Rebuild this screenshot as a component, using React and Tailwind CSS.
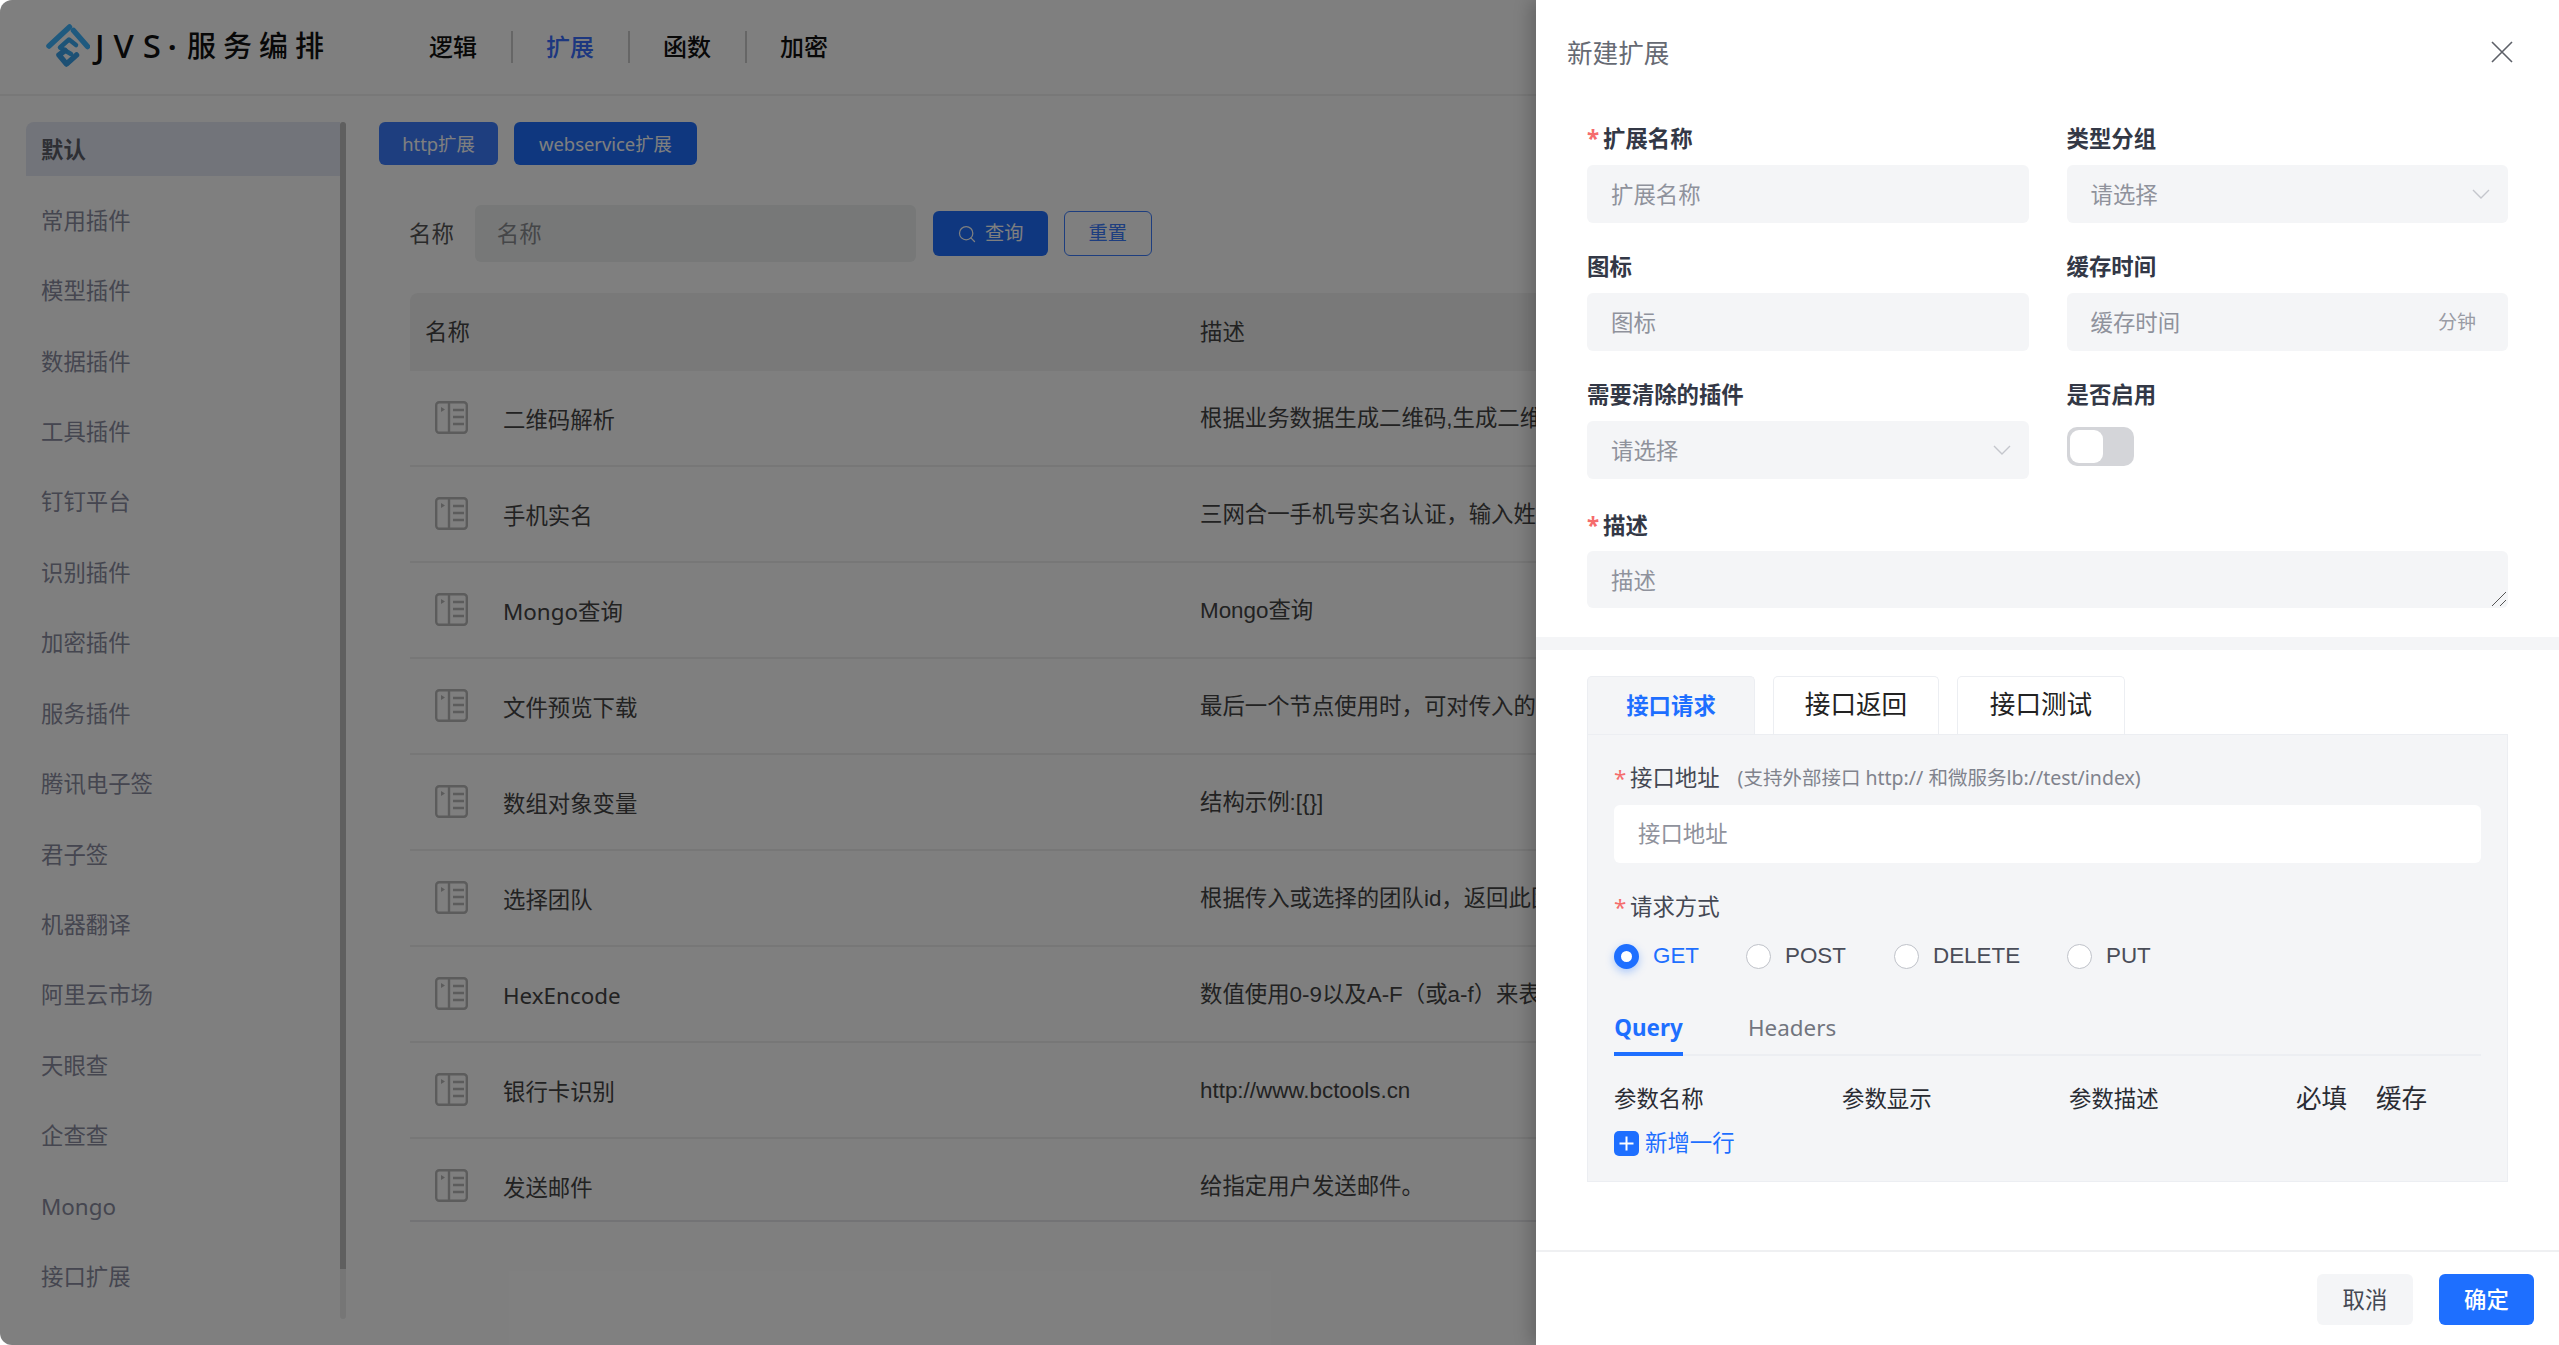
import React from 'react';
import { Search } from 'lucide-react';

const sideItems = ['常用插件', '模型插件', '数据插件', '工具插件', '钉钉平台', '识别插件', '加密插件', '服务插件', '腾讯电子签', '君子签', '机器翻译', '阿里云市场', '天眼查', '企查查', 'Mongo', '接口扩展'];

const rows = [
    ['二维码解析', '根据业务数据生成二维码,生成二维'],
    ['手机实名', '三网合一手机号实名认证，输入姓'],
    ['Mongo查询', 'Mongo查询'],
    ['文件预览下载', '最后一个节点使用时，可对传入的'],
    ['数组对象变量', '结构示例:[{}]'],
    ['选择团队', '根据传入或选择的团队id，返回此团'],
    ['HexEncode', '数值使用0-9以及A-F（或a-f）来表'],
    ['银行卡识别', 'http://www.bctools.cn'],
    ['发送邮件', '给指定用户发送邮件。'],
];

function Logo() {
    return (
        <svg width="44" height="44" viewBox="0 0 44 44" fill="none" className="shrink-0">
            <g stroke="#3fb4ff" strokeWidth="5.5" strokeLinecap="round" strokeLinejoin="round">
                <path d="M23.5 3 L3 22" />
                <path d="M27.5 6.5 L41.5 22.5" />
            </g>
            <g stroke="#3aa8f0" strokeWidth="4.5" strokeLinecap="round" strokeLinejoin="round">
                <path d="M30 21 L23 15.5 L14 23.5 L25 30" />
            </g>
            <g stroke="#3aa0e8" strokeWidth="5.5" strokeLinecap="round" strokeLinejoin="round">
                <path d="M19 26.5 L13 31 L20.5 40 L30.5 31" />
            </g>
        </svg>
    );
}

function RowIcon() {
    return (
        <svg width="33" height="33" viewBox="0 0 33 33" fill="none" className="shrink-0">
            <rect x="1.2" y="1.2" width="30.6" height="30.6" rx="3" stroke="#b8b8b8" strokeWidth="2.4" />
            <path d="M14 1 V32" stroke="#b8b8b8" strokeWidth="2.4" />
            <path d="M6 6 L10 8.5 L6 11 Z" fill="#b8b8b8" />
            <path d="M18 9 H29 M18 16 H29 M18 23 H29" stroke="#b8b8b8" strokeWidth="2.4" />
        </svg>
    );
}

function Chevron() {
    return (
        <svg width="18" height="10" viewBox="0 0 18 10" fill="none">
            <path d="M1 1 L9 9 L17 1" stroke="#c4c6cc" strokeWidth="1.4" />
        </svg>
    );
}

function FormLabel({ required, children }) {
    return (
        <div className="h-[26px] pt-[3px] flex items-center text-[22.4px] font-bold text-[#333846] leading-none">
            {required && <span className="w-[16px] text-[#f56c6c]">*</span>}
            {children}
        </div>
    );
}

function Field({ required, label, placeholder, select, suffix }) {
    return (
        <div className="w-[442px]">
            <FormLabel required={required}>{label}</FormLabel>
            <div className="mt-[14px] h-[58px] rounded-[6px] bg-[#f4f5f7] pl-[24px] pr-[18px] flex items-center justify-between text-[22.4px] text-[#8f929c]">
                <span className="pt-[2px]">{placeholder}</span>
                {select && <Chevron />}
                {suffix && <span className="text-[19px] text-[#9a9ca5] mr-[14px]">{suffix}</span>}
            </div>
        </div>
    );
}

function Radio({ label, checked, className }) {
    return (
        <div className={`flex items-center gap-[14px] text-[22.4px] font-['Liberation_Sans',sans-serif] ${className}`}>
            {checked ? (
                <span className="w-[25px] h-[25px] rounded-full border-[7px] border-[#1e6fff] bg-white shadow-[0_3px_8px_rgba(30,111,255,0.35)]" />
            ) : (
                <span className="w-[25px] h-[25px] rounded-full border border-[#bfc2c9] bg-white" />
            )}
            <span className={checked ? 'text-[#1e6fff]' : 'text-[#4a4d58]'}>{label}</span>
        </div>
    );
}

function Drawer() {
    return (
        <div className="absolute top-0 right-0 bottom-0 w-[1023px] bg-white shadow-[-6px_0_16px_rgba(0,0,0,0.2)] flex flex-col">
            <div className="h-[106px] shrink-0 pl-[31px] pr-[46px] flex items-center justify-between text-[25.6px] text-[#666a73]">
                <span className="pt-[2px]">新建扩展</span>
                <svg width="22" height="22" viewBox="0 0 22 22" fill="none" className="-mt-[3px]">
                    <path d="M1 1 L21 21 M21 1 L1 21" stroke="#5d6068" strokeWidth="1.6" />
                </svg>
            </div>

            <div className="pl-[51px] pr-[51px] flex flex-col gap-[30px] pt-[19px]">
                <div className="flex gap-[38px]">
                    <Field required label="扩展名称" placeholder="扩展名称" />
                    <Field label="类型分组" placeholder="请选择" select />
                </div>
                <div className="flex gap-[38px]">
                    <Field label="图标" placeholder="图标" />
                    <Field label="缓存时间" placeholder="缓存时间" suffix="分钟" />
                </div>
                <div className="flex gap-[38px]">
                    <Field label="需要清除的插件" placeholder="请选择" select />
                    <div className="w-[442px]">
                        <FormLabel>是否启用</FormLabel>
                        <div className="mt-[20px] w-[67px] h-[39px] rounded-[10px] bg-[#d4d5d9] p-[3px]">
                            <div className="w-[33px] h-[33px] rounded-[9px] bg-white" />
                        </div>
                    </div>
                </div>
                <div className="mt-[3px]">
                    <FormLabel required>描述</FormLabel>
                    <div className="relative mt-[13px] h-[57px] rounded-[6px] bg-[#f4f5f7] pl-[24px] flex items-center text-[22.4px] text-[#8f929c]">
                        <span className="pt-[2px]">描述</span>
                        <svg width="16" height="16" viewBox="0 0 16 16" fill="none" className="absolute right-[1px] bottom-[1px]">
                            <path d="M1 15 L15 1 M9 15 L15 9" stroke="#555" strokeWidth="1" />
                        </svg>
                    </div>
                </div>
            </div>

            <div className="mt-[29px] h-[13px] shrink-0 bg-[#f4f5f7]" />

            <div className="pl-[51px] pr-[51px] pt-[26px]">
                <div className="flex gap-[18px] h-[58px] items-stretch">
                    <div className="w-[168px] rounded-t-[5px] border border-b-0 border-[#eceef2] bg-[#f4f5f7] flex items-center justify-center text-[22.4px] font-bold text-[#1e6fff]">接口请求</div>
                    <div className="w-[166px] rounded-t-[5px] border border-b-0 border-[#eceef2] flex items-center justify-center text-[25.6px] text-[#222]">接口返回</div>
                    <div className="w-[168px] rounded-t-[5px] border border-b-0 border-[#eceef2] flex items-center justify-center text-[25.6px] text-[#222]">接口测试</div>
                </div>

                <div className="h-[448px] border border-[#eceef2] bg-[#f4f5f7] px-[26px] pt-[29px]">
                    <div className="h-[28px] flex items-center text-[22.4px] text-[#444853]">
                        <span className="w-[16px] text-[#f56c6c]">*</span>
                        <span>接口地址</span>
                        <span className="ml-[18px] text-[19.5px] text-[#80838d]">(支持外部接口 http:// 和微服务lb://test/index)</span>
                    </div>
                    <div className="mt-[13px] h-[58px] rounded-[6px] bg-white pl-[24px] flex items-center text-[22.4px] text-[#8f929c]">接口地址</div>
                    <div className="mt-[30px] h-[28px] flex items-center text-[22.4px] text-[#444853]">
                        <span className="w-[16px] text-[#f56c6c]">*</span>
                        <span>请求方式</span>
                    </div>
                    <div className="mt-[21px] h-[28px] flex items-center">
                        <Radio checked label="GET" className="w-[132px]" />
                        <Radio label="POST" className="w-[148px]" />
                        <Radio label="DELETE" className="w-[173px]" />
                        <Radio label="PUT" />
                    </div>
                    <div className="mt-[30px] h-[56px] border-b-2 border-[#eceef2] flex gap-[65px] text-[22.4px]">
                        <div className="h-[56px] w-[69px] border-b-[4px] border-[#1e6fff] font-bold text-[#1e6fff] flex items-start justify-center pt-[10px] leading-[36px]">Query</div>
                        <div className="text-[#72757f] pt-[10px] leading-[36px]">Headers</div>
                    </div>
                    <div className="mt-[26px] h-[34px] flex items-center text-[22.4px] text-[#2a2c33]">
                        <span className="w-[228px]">参数名称</span>
                        <span className="w-[227px]">参数显示</span>
                        <span className="w-[227px]">参数描述</span>
                        <span className="w-[80px] text-[25.6px]">必填</span>
                        <span className="text-[25.6px]">缓存</span>
                    </div>
                    <div className="mt-[13px] h-[28px] flex items-center gap-[6px] text-[22.4px] text-[#1e6fff]">
                        <svg width="25" height="25" viewBox="0 0 25 25" className="shrink-0">
                            <rect width="25" height="25" rx="5" fill="#1e6fff" />
                            <path d="M12.5 5.5 V19.5 M5.5 12.5 H19.5" stroke="#fff" strokeWidth="2" />
                        </svg>
                        新增一行
                    </div>
                </div>
            </div>

            <div className="mt-auto h-[95px] shrink-0 border-t-2 border-[#eff0f2] pt-[22px] pr-[25px] flex justify-end gap-[26px] text-[22.4px]">
                <div className="w-[96px] h-[51px] rounded-[6px] bg-[#f4f5f7] text-[#444853] flex items-center justify-center">取消</div>
                <div className="w-[95px] h-[51px] rounded-[6px] bg-[#1e6fff] text-white font-medium flex items-center justify-center">确定</div>
            </div>
        </div>
    );
}

export default function App() {
    return (
        <div className="relative h-screen overflow-hidden bg-white font-['Noto_Sans','Noto_Sans_CJK_SC',sans-serif] text-[22.4px]">
            {/* page under the mask */}
            <div className="h-[96px] border-b-2 border-[#f0f0f0] pl-[46px] flex items-center">
                <div className="w-[383px] shrink-0 flex items-center h-[44px] -mt-[2px]">
                    <Logo />
                    <span className="ml-[5px] w-[73px] text-[33px] font-medium text-[#111] tracking-[9px]">JVS</span>
                    <span className="w-[19px] text-[30px] font-bold text-[#111]">·</span>
                    <span className="text-[29px] font-medium text-[#111] tracking-[7px] whitespace-nowrap">服务编排</span>
                </div>
                <div className="flex items-center text-[24px] font-medium text-[#111]">
                    <span className="pr-[33.5px]">逻辑</span>
                    <span className="px-[33.5px] border-l-2 border-[#ccc] leading-[32px] text-[#3a6fff]">扩展</span>
                    <span className="px-[33.5px] border-l-2 border-[#ccc] leading-[32px]">函数</span>
                    <span className="px-[33.5px] border-l-2 border-[#ccc] leading-[32px]">加密</span>
                </div>
            </div>

            <div className="flex pl-[26px] pt-[26px]">
                <div className="w-[314px] shrink-0 text-[#8a8ca0]">
                    <div className="h-[54px] mb-[16.44px] pl-[15px] pt-[2px] flex items-center font-bold text-[#5c5e68] bg-[#e4e8f4] rounded-tl-[8px]">默认</div>
                    {sideItems.map(item => (
                        <div key={item} className="h-[54px] mb-[16.44px] pl-[15px] pt-[2px] flex items-center">{item}</div>
                    ))}
                </div>
                <div className="w-[6px] shrink-0">
                    <div className="h-[1147px] rounded-t-[3px] bg-[#bebebe]" />
                    <div className="h-[50px] rounded-b-[3px] bg-[#ededed]" />
                </div>

                <div className="ml-[33px] flex-1 min-w-0">
                    <div className="flex gap-[16px] text-[18.4px] text-white">
                        <div className="w-[119px] h-[43px] rounded-[6px] bg-[#3c7dff] flex items-center justify-center">http扩展</div>
                        <div className="w-[183px] h-[43px] rounded-[6px] bg-[#1e6fff] flex items-center justify-center">webservice扩展</div>
                    </div>

                    <div className="mt-[40px] flex items-center pl-[30px] h-[57px]">
                        <span className="text-[#555]">名称</span>
                        <div className="ml-[21px] w-[441px] h-[57px] rounded-[6px] bg-[#eef1f0] pl-[22px] flex items-center text-[#8a8c90]">名称</div>
                        <div className="ml-[17px] w-[115px] h-[45px] rounded-[6px] bg-[#1e6fff] text-white flex items-center justify-center gap-[8px] text-[19.2px]">
                            <Search size={20} strokeWidth={1.5} />
                            查询
                        </div>
                        <div className="ml-[16px] w-[88px] h-[45px] rounded-[6px] border border-[#3c7dff] text-[#3c7dff] flex items-center justify-center text-[19.2px]">重置</div>
                    </div>

                    <div className="mt-[31px] ml-[31px] text-[#444]">
                        <div className="h-[78px] rounded-tl-[8px] bg-[#f3f3f3] flex items-center">
                            <span className="w-[790px] pl-[15px]">名称</span>
                            <span>描述</span>
                        </div>
                        <div className="h-[851px] overflow-hidden border-b-2 border-[#e6e6ea]">
                            {rows.map(([name, desc]) => (
                                <div key={name} className="h-[96px] shrink-0 border-b-2 border-[#eeeeee] flex items-center">
                                    <div className="w-[790px] shrink-0 pl-[25px] flex items-center gap-[35px]">
                                        <RowIcon />
                                        <span className="pt-[3px]">{name}</span>
                                    </div>
                                    <span className="block w-[336px] pt-[1px] overflow-hidden whitespace-nowrap font-['Liberation_Sans','Noto_Sans_CJK_SC',sans-serif]">{desc}</span>
                                </div>
                            ))}
                        </div>
                    </div>
                </div>
            </div>

            {/* mask and drawer */}
            <div className="absolute inset-0 bg-black/50 rounded-l-[12px]" />
            <Drawer />
        </div>
    );
}
